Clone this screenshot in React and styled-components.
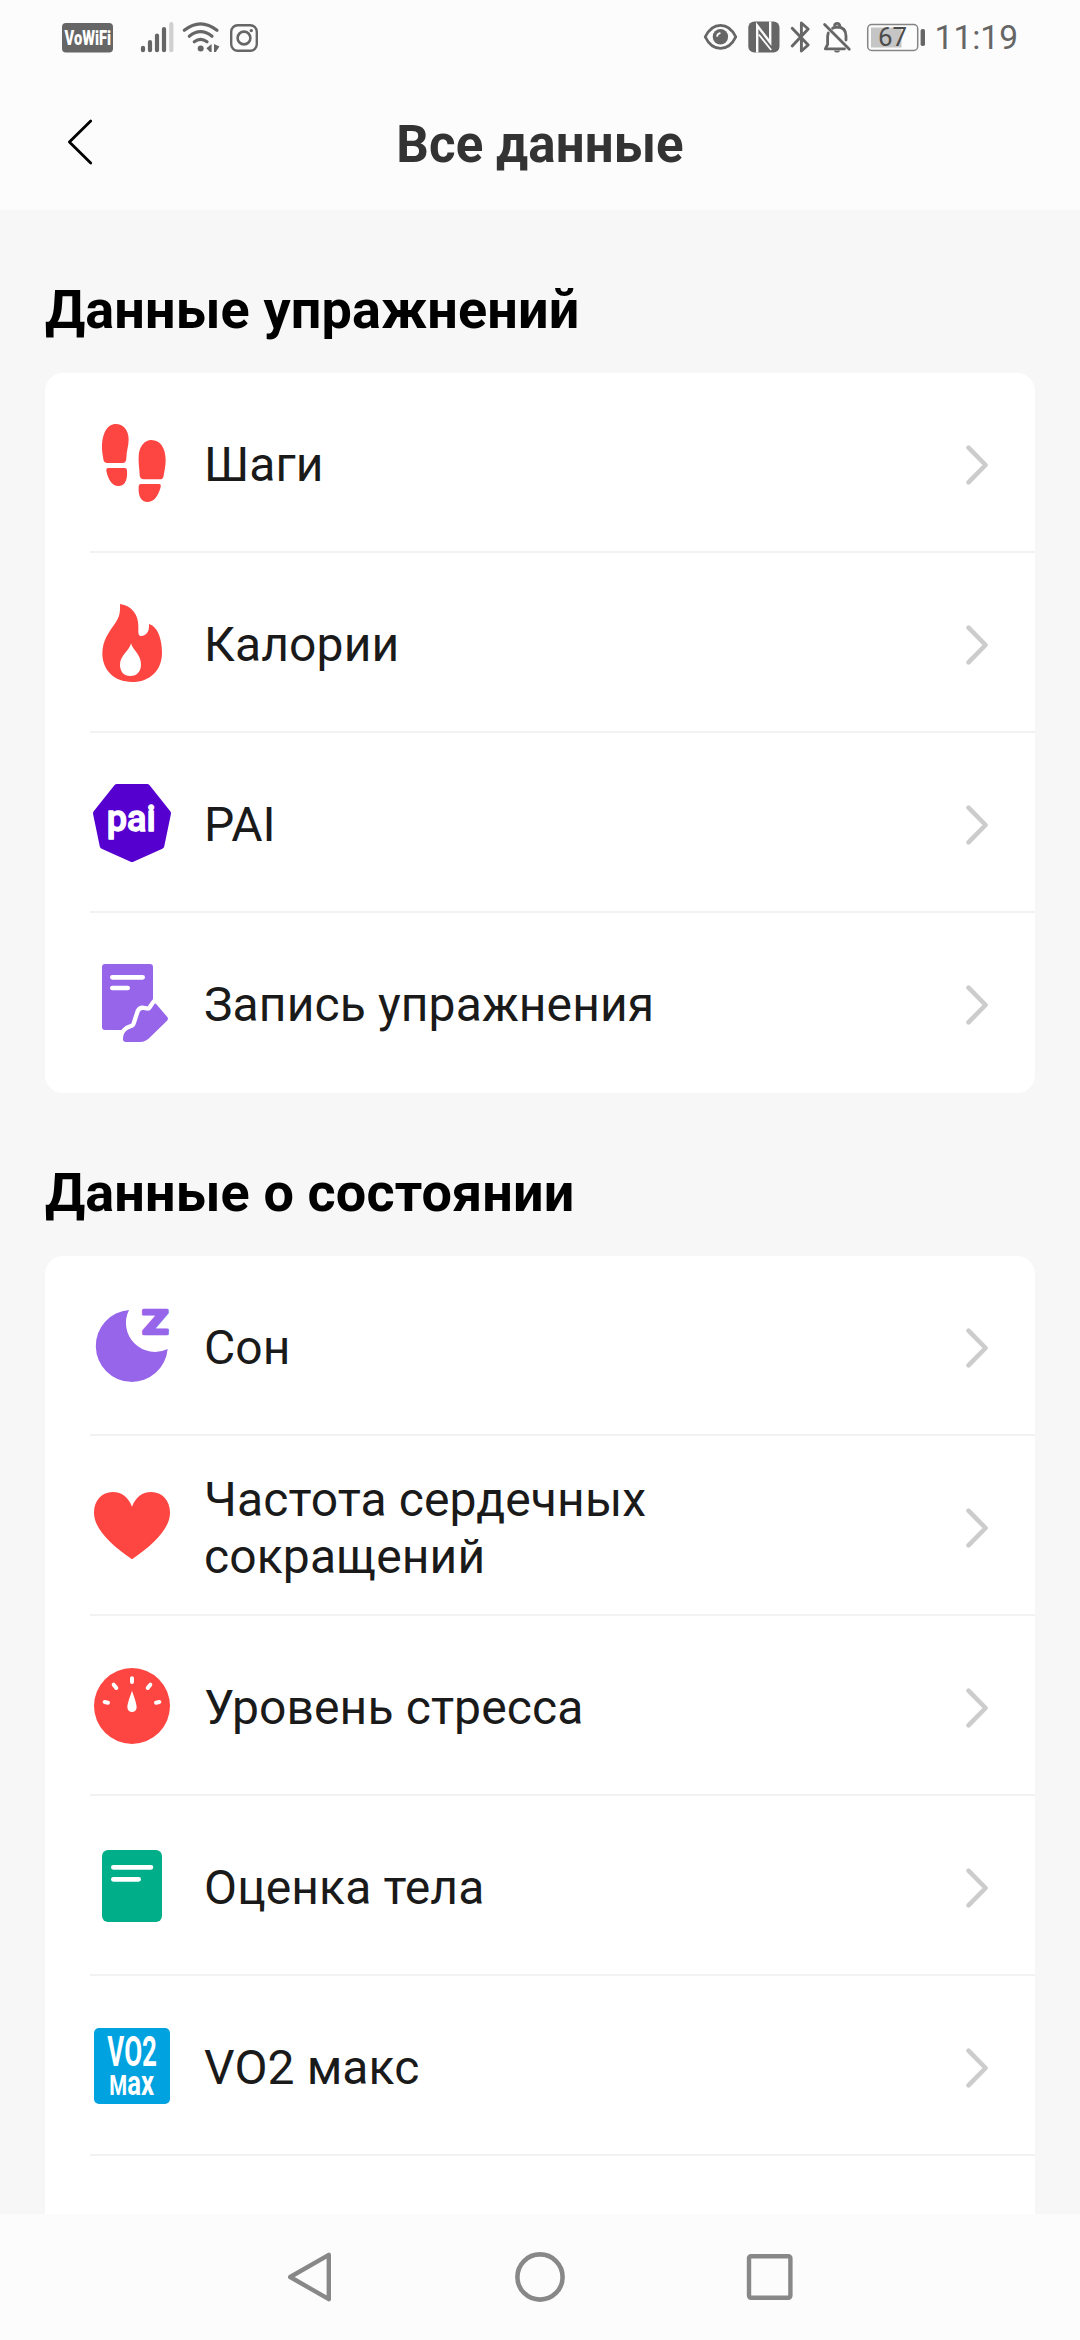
import React from 'react';
import styled, { createGlobalStyle } from 'styled-components';

const GlobalStyle = createGlobalStyle`
    * {
        box-sizing: border-box;
    }

    body {
        margin: 0;
        background: #F7F7F7;
        font-family: Roboto, 'Noto Sans', sans-serif;
    }

    svg {
        display: block;
        flex-shrink: 0;
        overflow: visible;
    }

    h1, h2, p, ul {
        margin: 0;
        padding: 0;
    }
`;

const Screen = styled.div`
    width: 1080px;
    height: 2340px;
    display: flex;
    flex-direction: column;
    overflow: hidden;
    background: #F7F7F7;
`;

const StatusBar = styled.div`
    height: 76px;
    flex-shrink: 0;
    padding: 0 62px;
    display: flex;
    justify-content: space-between;
    background: #FCFCFC;
`;

const StatusGroup = styled.div`
    display: flex;

    .clock {
        margin-left: 7.5px;
        color: #666666;
        font-size: 33.5px;
        line-height: 76px;
    }
`;

const Header = styled.header`
    height: 134px;
    flex-shrink: 0;
    display: grid;
    grid-template-columns: 160px 1fr 160px;
    align-items: center;
    background: #FCFCFC;

    svg {
        margin: -2px 0 0 60px;
    }

    h1 {
        padding-top: 4px;
        color: #333333;
        font-size: 51px;
        font-weight: 700;
        letter-spacing: 0.1px;
        line-height: 60px;
        text-align: center;
    }
`;

const Content = styled.main`
    flex: 1;
    min-height: 0;
    overflow: hidden;
    padding: 0 45px;
`;

const SectionTitle = styled.h2`
    height: 163px;
    padding-top: 68px;
    color: #000000;
    font-size: 54px;
    font-weight: 700;
    letter-spacing: 0.12px;
    line-height: 64px;
    white-space: nowrap;
`;

const Card = styled.ul`
    list-style: none;
    border-radius: 18px;
    background: #FFFFFF;
    overflow: hidden;
`;

const Row = styled.li`
    height: 180px;
    margin-left: 45px;
    padding-right: 46px;
    display: grid;
    grid-template-columns: 84px 1fr auto;
    align-items: center;
    column-gap: 30px;
    box-shadow: ${({ $last }) => $last ? 'none' : 'inset 0 -2px #F2F2F2'};

    p {
        max-width: 520px;
        padding-top: 3px;
        color: #1A1A1A;
        font-size: 48px;
        letter-spacing: 0.12px;
        line-height: 57px;
    }

    .chevron {
        margin-top: 3px;
    }
`;

const NavBar = styled.nav`
    height: 126px;
    flex-shrink: 0;
    padding-left: 195px;
    display: grid;
    grid-template-columns: repeat(3, 230px);
    justify-items: center;
    align-items: center;
    background: #FCFCFC;
`;

const StepsIcon = () => (
    <svg width="84" height="84" viewBox="0 0 252 252" fill="#FD4642">
        <path d="M78 9C98 9 116 26 116 56C116 74 109 92 109 112Q109 126 98 126H52Q41 126 40 114C38 100 36 92 36 80C36 40 50 9 78 9Z" />
        <path d="M55 141H104Q111 141 111 149C113 178 104 195 86 195C64 195 54 172 49 150Q48 141 55 141Z" />
        <path d="M184 57C212 57 227 82 227 118C227 136 223 150 221 164Q219 175 210 175H161Q150 175 149 163C149 146 145 132 146 106C147 76 164 57 184 57Z" />
        <path d="M153 189H207Q214 189 212 198C207 217 196 243 173 243C154 243 144 226 146 197Q146 189 153 189Z" />
    </svg>
);

const CaloriesIcon = () => (
    <svg width="84" height="84" viewBox="0 0 252 252">
        <path d="M90 9C126 14 145 42 145 74V92Q145 105 153 105C168 105 177 93 177 76V69C202 76 216 112 216 155C216 208 180 243 126 243C72 243 37 207 37 157C37 118 58 92 76 66C88 48 91 36 90 9Z" fill="#FD4642" />
        <path d="M123 127C128 147 153 160 153 190C153 212 141 225 121 225C101 225 90 211 90 191C90 163 118 150 123 127Z" fill="#FFFFFF" />
    </svg>
);

const PaiIcon = () => (
    <svg width="84" height="84" viewBox="0 0 252 252">
        <polygon points="81,19 171,19 233,97 213,194 126,233 39,194 19,97" fill="#5600D0" stroke="#5600D0" strokeWidth="20" strokeLinejoin="round" />
        <text x="50" y="150" fill="#FFFFFF" stroke="#FFFFFF" strokeWidth="4" strokeLinejoin="round" fontSize="112" fontWeight="500" textLength="147" lengthAdjust="spacingAndGlyphs">pai</text>
    </svg>
);

const RecordIcon = () => (
    <svg width="84" height="84" viewBox="0 0 252 252">
        <rect x="36" y="9" width="153" height="198" rx="9" fill="#9765EA" />
        <path d="M67 49H158M67 81H113" stroke="#FFFFFF" strokeWidth="14" strokeLinecap="round" />
        <path d="M195 127Q199 129 201 132L232 168Q236 174 231 179L184 225Q168 243 150 243H108Q98 243 99 232C100 210 115 204 128 200Q135 197 137 190L149 153Q152 146 160 147L174 149Q180 149 184 143Z" fill="#9765EA" stroke="#FFFFFF" strokeWidth="26" strokeLinejoin="round" paintOrder="stroke" />
    </svg>
);

const SleepIcon = () => (
    <svg width="84" height="84" viewBox="0 0 252 252" fill="#9765EA">
        <path d="M117 18A87 87 0 0 0 233 135A108 108 0 1 1 117 18Z" />
        <text x="157" y="90" stroke="#9765EA" strokeWidth="7" strokeLinejoin="round" fontSize="97" fontWeight="900" textLength="78" lengthAdjust="spacingAndGlyphs">Z</text>
    </svg>
);

const HeartIcon = () => (
    <svg width="84" height="84" viewBox="0 0 252 252">
        <path d="M126 68C136 42 155 24 184 24C216 24 240 50 240 86C240 134 190 182 126 226C62 182 12 134 12 86C12 50 36 24 68 24C97 24 116 42 126 68Z" fill="#FD4642" />
    </svg>
);

const StressIcon = () => (
    <svg width="84" height="84" viewBox="0 0 252 252">
        <circle cx="126" cy="126" r="114" fill="#FD4642" />
        <path d="M126 43V54M71 62L79 72M181 62L173 72M44 114L54 116M208 114L198 116" stroke="#FFFFFF" strokeWidth="12" strokeLinecap="round" />
        <path d="M126 80C130 92 140 118 140 130A14 14 0 0 1 112 130C112 118 122 92 126 80Z" fill="#FFFFFF" />
    </svg>
);

const BodyIcon = () => (
    <svg width="84" height="84" viewBox="0 0 252 252">
        <rect x="36" y="18" width="180" height="216" rx="18" fill="#00AE89" />
        <path d="M70 70H183M70 106H146" stroke="#FFFFFF" strokeWidth="14" strokeLinecap="round" />
    </svg>
);

const Vo2Icon = () => (
    <svg width="84" height="84" viewBox="0 0 252 252">
        <rect x="12" y="12" width="228" height="228" rx="15" fill="#00A2DF" />
        <g fill="#FFFFFF" fontWeight="700">
            <text x="52" y="126" fontSize="126" textLength="149" lengthAdjust="spacingAndGlyphs">VO2</text>
            <text x="58" y="213" fontSize="106" textLength="134" lengthAdjust="spacingAndGlyphs">
                <tspan fontSize="84">M</tspan>ax
            </text>
        </g>
    </svg>
);

const Chevron = () => (
    <svg className="chevron" width="24" height="42" viewBox="0 0 24 42">
        <path d="M3.5 3.7L20.6 21L3.5 38.3" fill="none" stroke="#CCCCCC" strokeWidth="4.6" strokeLinecap="round" strokeLinejoin="round" />
    </svg>
);

// VoWiFi badge, signal, wi-fi and instagram
const StatusLeft = () => (
    <svg width="200" height="76" viewBox="62 0 200 76">
        <rect x="62" y="23" width="51" height="29.5" rx="4" fill="#666666" />
        <text x="64.5" y="44.6" fill="#FFFFFF" fontSize="19.5" fontWeight="900" textLength="46.5" lengthAdjust="spacingAndGlyphs">VoWiFi</text>
        <g strokeWidth="4.2" strokeLinecap="round" stroke="#666666">
            <path d="M143 47.8V50.2M150 42V50.2M157 35.5V50.2M164 29V50.2" />
            <path d="M171.3 24V50.2" stroke="#D0D0D0" />
        </g>
        <g fill="none" stroke="#666666" strokeWidth="3.2" strokeLinecap="round">
            <path d="M184.3 30.3Q200.5 17.5 217 30.3M189.3 36.2Q200.5 27 212 36.2M194.3 41.8Q200.5 37 207 41.8" />
        </g>
        <circle cx="200.7" cy="48.6" r="3" fill="#666666" />
        <path d="M211.6 44V52H210L206.4 48.3ZM214 44V52H215.8L219.4 46.5Z" fill="#666666" />
        <rect x="231.2" y="25.2" width="25.6" height="25.6" rx="6.5" fill="none" stroke="#666666" strokeWidth="2.4" />
        <circle cx="244" cy="38" r="6.4" fill="none" stroke="#666666" strokeWidth="2.6" />
        <circle cx="251.3" cy="30.6" r="1.7" fill="#666666" />
    </svg>
);

// eye comfort, NFC, bluetooth, muted bell and battery
const StatusRight = () => (
    <svg width="224" height="76" viewBox="703 0 224 76">
        <path d="M705.2 36.8C709 29 714.5 25.3 720.5 25.3S732 29 735.8 36.8C732 44.6 726.5 48.3 720.5 48.3S709 44.6 705.2 36.8Z" fill="none" stroke="#666666" strokeWidth="2.7" strokeLinejoin="round" />
        <circle cx="720.4" cy="36.8" r="7.7" fill="#666666" />
        <path d="M717.2 35.8Q717.5 33.6 719.7 33.2" fill="none" stroke="#FCFCFC" strokeWidth="2" strokeLinecap="round" />
        <rect x="748.3" y="21.5" width="31.2" height="31" rx="6" fill="#666666" />
        <path d="M757.2 52.5V25.5L770.2 42.5V21.5" fill="none" stroke="#FCFCFC" strokeWidth="2.4" />
        <path d="M758.8 34.5L771.2 50" fill="none" stroke="#FCFCFC" strokeWidth="1.8" />
        <path d="M792.2 28.2L808.2 45L801.4 51V23L808.2 29L792.2 46" fill="none" stroke="#666666" strokeWidth="2.9" strokeLinecap="round" strokeLinejoin="round" />
        <g fill="none" stroke="#666666" strokeWidth="2.8" strokeLinecap="round" strokeLinejoin="round">
            <path d="M824.6 24.5L849.3 49.3" />
            <path d="M828.3 33Q827.6 35 827.6 38V44.5L825.3 48.8H844.5" />
            <path d="M832.6 28.2Q834.6 27 837.3 27Q846 27.3 846 36V40" />
            <path d="M834.6 25.2Q835.2 23.3 837.2 23.3T839.8 25.6" />
        </g>
        <path d="M833.8 50.4H840.2Q839.4 52.6 837 52.6T833.8 50.4Z" fill="#666666" />
        <rect x="867.7" y="24.5" width="50" height="26" rx="4" fill="none" stroke="#858585" strokeWidth="1.5" />
        <rect x="871" y="27.5" width="30.5" height="20" fill="#C5C5C5" />
        <text x="878" y="46" fill="#4C4C4C" fontSize="25.5" textLength="29" lengthAdjust="spacingAndGlyphs">67</text>
        <rect x="920.6" y="29" width="4.4" height="17" rx="1.8" fill="#666666" />
    </svg>
);

const exercise = [
    { title: 'Шаги', Icon: StepsIcon },
    { title: 'Калории', Icon: CaloriesIcon },
    { title: 'PAI', Icon: PaiIcon },
    { title: 'Запись упражнения', Icon: RecordIcon, last: true }
];

const condition = [
    { title: 'Сон', Icon: SleepIcon },
    { title: 'Частота сердечных сокращений', Icon: HeartIcon },
    { title: 'Уровень стресса', Icon: StressIcon },
    { title: 'Оценка тела', Icon: BodyIcon },
    { title: 'VO2 макс', Icon: Vo2Icon }
];

const Section = ({ title, items, children }) => (
    <section>
        <SectionTitle>{title}</SectionTitle>
        <Card>
            {
                items.map(({ title, Icon, last }) => (
                    <Row key={title} $last={last}>
                        <Icon />
                        <p>{title}</p>
                        <Chevron />
                    </Row>
                ))
            }
            {children}
        </Card>
    </section>
);

const App = () => {
    return (
        <>
            <GlobalStyle />
            <Screen>
                <StatusBar>
                    <StatusGroup>
                        <StatusLeft />
                    </StatusGroup>
                    <StatusGroup>
                        <StatusRight />
                        <span className="clock">11:19</span>
                    </StatusGroup>
                </StatusBar>
                <Header>
                    <svg width="40" height="50" viewBox="60 117 40 50">
                        <path d="M90.7 121L69.4 142L90.7 163" fill="none" stroke="#000000" strokeWidth="2.8" strokeLinecap="round" strokeLinejoin="round" />
                    </svg>
                    <h1>Все данные</h1>
                </Header>
                <Content>
                    <Section title="Данные упражнений" items={exercise} />
                    <Section title="Данные о состоянии" items={condition}>
                        {/* top of the next row, cut off by the nav bar */}
                        <Row $last />
                    </Section>
                </Content>
                <NavBar>
                    <svg width="56" height="56" viewBox="0 0 56 56" fill="none" stroke="#888888" strokeWidth="4.4" strokeLinejoin="round">
                        <path d="M46.8 5.8V50.2L8.2 28Z" />
                    </svg>
                    <svg width="56" height="56" viewBox="0 0 56 56" fill="none" stroke="#888888" strokeWidth="4.6">
                        <circle cx="28" cy="28" r="22.6" />
                    </svg>
                    <svg width="56" height="56" viewBox="0 0 56 56" fill="none" stroke="#888888" strokeWidth="4.4">
                        <rect x="7" y="7.3" width="41.4" height="41.4" rx="2" />
                    </svg>
                </NavBar>
            </Screen>
        </>
    );
};

export default App;
